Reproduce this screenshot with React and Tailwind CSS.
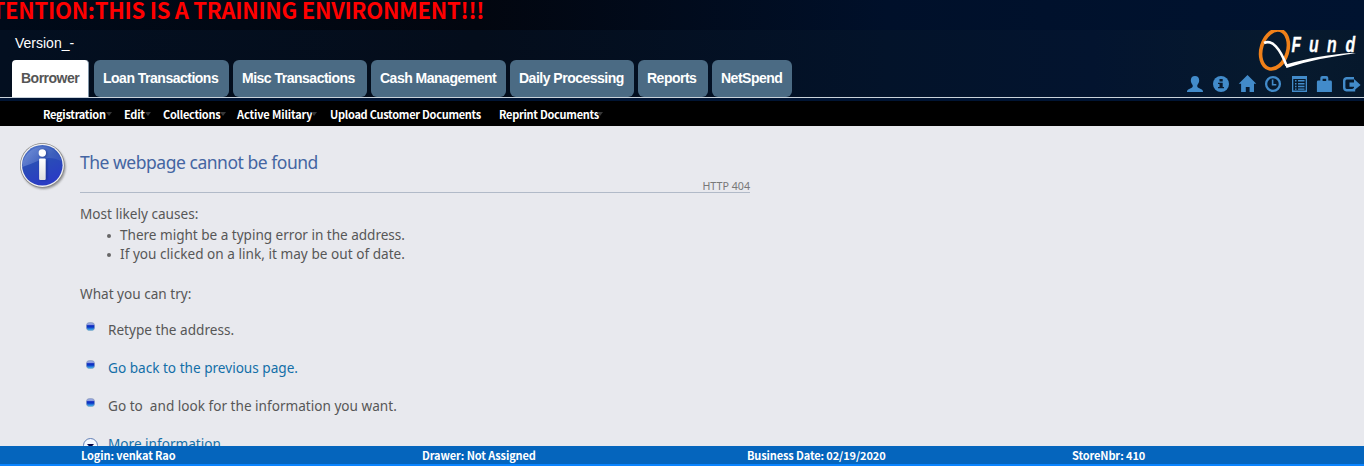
const ICON = "#428bca";

function Logo() {
  return (
    <svg width="104" height="42" viewBox="0 0 104 42" className="block overflow-hidden">
      <g fill="none">
        <ellipse cx="17.5" cy="19.5" rx="13.2" ry="20" transform="rotate(17 17.5 19.5)" stroke="#f08019" strokeWidth="3.600" />
        <path d="M7 13C15 9 23 18.500 29.500 35.500" stroke="#fff" strokeWidth="2.600" />
      </g>
      <path d="M28 34.500L29.500 38C52 30.500 74 26.500 99 23.200L92 23C72 24.700 50 28.500 30.500 34Z" fill="#fff" />
      <g fill="#fff" stroke="#fff" strokeWidth=".3" fontFamily="Liberation Sans, sans-serif" fontWeight="bold" fontStyle="italic" fontSize="22">
        <text transform="translate(34.500 21.800) scale(.7 1)">F</text>
        <text transform="translate(52 21.800) scale(.72 1)">u</text>
        <text transform="translate(70 21.800) scale(.72 1)">n</text>
        <text transform="translate(88.500 21.800) scale(.72 1)">d</text>
      </g>
    </svg>
  );
}

function ToolIcons() {
  return (
    <div className="flex items-center">
      <svg width="177" height="18" viewBox="1185 75 177 18" fill={ICON}>
        <path d="M1195 76c2.500 0 4.200 1.600 4.200 4.200 0 2-1 3.600-1.800 4.800-.5 1.500 0 2.200 1.400 3l3 1.600c.8.400 1.200 1.200 1.200 2.400h-16c0-1.200.4-2 1.200-2.400l3-1.600c1.400-.8 1.900-1.500 1.400-3-.8-1.200-1.800-2.800-1.800-4.800 0-2.600 1.700-4.200 4.200-4.200z" />
        <circle cx="1221" cy="84" r="8" />
        <path d="M1219.500 79h3.200v2.500h-3.200zM1218 82.700h4.700v4.300h1.300v1.300h-6V87h1.500v-3H1218z" fill="#0a1a2e" />
        <path d="M1247.500 75l8.800 8.700h-2.300V92h-4.400v-5h-3.800v5h-4.700v-8.300h-2.400z" />
        <circle cx="1273" cy="84" r="6.900" fill="none" stroke={ICON} strokeWidth="2.300" />
        <path d="M1272.600 79.500v5.300h3.700" fill="none" stroke={ICON} strokeWidth="1.600" />
        <path fillRule="evenodd" d="M1292 76h15v16h-15zM1293.300 79v11.500h12.400V79z" />
        <path d="M1295 80h1.500v1.400h-1.500zM1298 80h6.500v1.400h-6.500zM1295 83h1.500v1.400h-1.500zM1298 83h6.500v1.400h-6.500zM1295 85.800h1.500v1.400h-1.500zM1298 85.800h6.500v1.400h-6.500zM1295 88.400h1.500v1.300h-1.500zM1298 88.400h6.500v1.300h-6.500z" />
        <path fillRule="evenodd" d="M1320.300 80.500V78a2 2 0 0 1 2-2h4a2 2 0 0 1 2 2v2.500h2.200a1.400 1.400 0 0 1 1.400 1.400V92h-15v-10.100a1.400 1.400 0 0 1 1.400-1.400zM1322.600 81h3.600v-2.200h-3.600z" />
        <path d="M1354 78.300h-7.500a2.800 2.800 0 0 0-2.300 2.800v6.300a2.800 2.800 0 0 0 2.300 2.800h7.500v-2" fill="none" stroke={ICON} strokeWidth="2.400" />
        <path d="M1349.500 82.500h4.500v-3.500l6.600 5.900-6.600 5.700v-3.800h-4.500z" />
      </svg>
    </div>
  );
}

const TABS = [
  ["Loan Transactions", "w-[135px]"],
  ["Misc Transactions", "w-[134px]"],
  ["Cash Management", "w-[135px]"],
  ["Daily Processing", "w-[124px]"],
  ["Reports", "w-[70px]"],
  ["NetSpend", "w-[80px]"],
];

const MENU = [
  ["Registration", "w-[81px]", "w-[63px]", true],
  ["Edit", "w-[39px]", "w-[21px]", true],
  ["Collections", "w-[74px]", "w-[57px]", true],
  ["Active Military", "w-[93px]", "w-[74px] tracking-[-0.13px]", true],
  ["Upload Customer Documents", "w-[169px]", "w-[151px]", false],
  ["Reprint Documents", "w-[110px]", "w-[98px]", true],
];

function InfoBadge() {
  return (
    <svg width="50" height="50" viewBox="0 0 50 50" className="block">
      <defs>
        <linearGradient id="orb" x1="0" y1="0" x2="0.4" y2="1">
          <stop offset="0" stopColor="#5c80cf" />
          <stop offset=".45" stopColor="#2a4fb5" />
          <stop offset="1" stopColor="#2a3cc4" />
        </linearGradient>
        <linearGradient id="gloss" x1="0" y1="0" x2="1" y2="0">
          <stop offset="0" stopColor="#a8bcf0" stopOpacity=".4" />
          <stop offset="1" stopColor="#5070c0" stopOpacity=".3" />
        </linearGradient>
        <linearGradient id="stem" x1="0" y1="0" x2="0" y2="1">
          <stop offset="0" stopColor="#fff" />
          <stop offset="1" stopColor="#dedee0" />
        </linearGradient>
        <filter id="soft"><feGaussianBlur stdDeviation="1" /></filter>
      </defs>
      <circle cx="23.500" cy="25" r="22" fill="#555" opacity=".6" filter="url(#soft)" />
      <circle cx="22.300" cy="23.300" r="22.300" fill="#858585" />
      <circle cx="22.300" cy="23.300" r="21.600" fill="#f1f1f1" />
      <circle cx="22.300" cy="23.300" r="20.300" fill="url(#orb)" />
      <path d="M2.200 25A20.300 20.300 0 0 1 42 19.500Q30 13.500 20 18T2.200 25z" fill="url(#gloss)" />
      <g opacity=".5" fill="#102070" filter="url(#soft)"><circle cx="23.300" cy="11.500" r="4" /><rect x="20" y="18" width="7" height="20" /></g>
      <circle cx="22.300" cy="11" r="3.700" fill="#fff" />
      <rect x="19.100" y="16.500" width="6.600" height="21.500" rx="1" fill="url(#stem)" />
    </svg>
  );
}

function Bullet() {
  return (
    <svg width="9" height="9" viewBox="0 0 10 10" className="block">
      <defs>
        <linearGradient id="dot" x1="0" y1="0" x2="0" y2="1">
          <stop offset="0" stopColor="#9daade" />
          <stop offset=".28" stopColor="#8a9ae0" />
          <stop offset=".4" stopColor="#0a25c0" />
          <stop offset=".6" stopColor="#1040c8" />
          <stop offset="1" stopColor="#48c8f4" />
        </linearGradient>
      </defs>
      <rect x=".5" y=".5" width="9" height="9" rx="3.500" fill="url(#dot)" stroke="#8598b8" strokeWidth=".7" />
    </svg>
  );
}

function Step({ children, link }) {
  return (
    <li className="flex h-[38px] items-start">
      <span className="mt-[2px] ml-[6px] w-[22px]"><Bullet /></span>
      <span className={link ? "whitespace-pre leading-[20px] text-[#136fa8]" : "whitespace-pre leading-[20px]"}>{children}</span>
    </li>
  );
}

export default function App() {
  return (
    <div className="flex h-[466px] w-[1364px] flex-col overflow-hidden bg-[#e8e9ee] font-['Liberation_Sans',sans-serif]">
      <header className="flex h-[101px] flex-none flex-col bg-[linear-gradient(90deg,#030f20_0%,#040d1b_35%,#03132a_65%,#03142f_80%,#071a2e_95%,#06182c_100%)]">
        <div className="flex h-[30px] flex-none overflow-hidden bg-[linear-gradient(90deg,#000a19_0%,#02060f_35%,#00102a_65%,#001330_100%)]">
          <p className="-mt-[8px] -ml-[34px] h-[34px] whitespace-nowrap font-['Noto_Sans_CJK_SC',sans-serif] text-[22px] leading-[34px] font-bold tracking-[-0.28px] text-[#ff0000]">ATTENTION:THIS IS A TRAINING ENVIRONMENT!!!</p>
        </div>
        <div className="flex h-[67px] flex-none justify-between">
          <div className="flex flex-col">
            <p className="ml-[15px] h-[30px] pt-[3px] text-[14px] leading-[20px] text-white">Version_-</p>
            <nav className="flex h-[37px] gap-[4px] pl-[12px] text-[14px] leading-[36px] font-bold tracking-[-0.5px] text-white">
              <a className="mr-[1px] w-[77px] rounded-t-[4px] border-r border-[#8296a8] bg-white pl-[9px] text-[#555]">Borrower</a>
              {TABS.map(([label, width]) => (
                <a key={label} className={`${width} rounded-[6px] bg-[#4b6b84] pl-[9px] whitespace-nowrap`}>{label}</a>
              ))}
            </nav>
          </div>
          <div className="flex flex-col items-end">
            <div className="mr-[3px] h-[45px]"><Logo /></div>
            <div className="mr-[2px]"><ToolIcons /></div>
          </div>
        </div>
        <div className="h-px flex-none bg-[#c9d2da]" />
        <div className="h-[3px] bg-[#001433]" />
      </header>
      <nav className="flex h-[25px] flex-none bg-black pt-[1px] pl-[43px] font-['Noto_Sans_CJK_SC',sans-serif] text-[11px] leading-[24px] font-bold tracking-[-0.28px] text-white">
        {MENU.map(([label, width, textWidth, arrow]) => (
          <a key={label} className={`flex items-center whitespace-nowrap ${width}`}>
            <span className={textWidth}>{label}</span>
            {arrow && <svg width="6" height="4" viewBox="0 0 6 4" className="flex-none"><path d="M0 0h6L3 4z" fill="#383838" /></svg>}
          </a>
        ))}
      </nav>
      <main className="flex h-[320px] flex-none items-start overflow-hidden pl-[20px] font-['Noto_Sans',sans-serif] text-[13.600px] text-[#575757]">
        <div className="mt-[16px] w-[60px] flex-none"><InfoBadge /></div>
        <div className="w-[670px]">
          <h1 className="mt-[22px] h-[29px] text-[17.500px] leading-[28px] tracking-[-0.47px] text-[#4465a2]">The webpage cannot be found</h1>
          <p className="h-[16px] border-b border-[#b1bac8] text-right text-[10.700px] leading-[18px] text-[#787878]">HTTP 404</p>
          <p className="mt-[11px] h-[22px] leading-[20px]">Most likely causes:</p>
          <ul className="list-none">
            <li className="flex h-[19px] items-center tracking-[-0.03px]"><span className="ml-[27px] mr-[9px] size-[4px] rounded-full bg-[#666]" />There might be a typing error in the address.</li>
            <li className="flex h-[19px] items-center tracking-[0.02px]"><span className="ml-[27px] mr-[9px] size-[4px] rounded-full bg-[#666]" />If you clicked on a link, it may be out of date.</li>
          </ul>
          <p className="mt-[20px] h-[36px] leading-[20px]">What you can try:</p>
          <ul>
            <Step>Retype the address.</Step>
            <Step link>Go back to the previous page.</Step>
            <Step>{"Go to  and look for the information you want."}</Step>
            <li className="flex items-start leading-[20px] text-[#136fa8]">
              <svg width="16" height="16" viewBox="0 0 16 16" className="mt-[4px] mr-[9px] ml-[3px]">
                <circle cx="7.500" cy="7.500" r="7" fill="#f5f8ff" stroke="#607fb5" />
                <path d="M4 6h7L7.500 10z" fill="#050544" />
              </svg>
              More information
            </li>
          </ul>
        </div>
      </main>
      <footer className="flex h-[20px] flex-none border-b-2 border-[#0a84ff] bg-[#0565bd] pl-[81px] font-['Noto_Sans_CJK_SC',sans-serif] text-[11px] leading-[18px] font-bold tracking-[-0.12px] text-white">
        <span className="w-[341px]">Login: venkat Rao</span>
        <span className="w-[325px]">Drawer: Not Assigned</span>
        <span className="w-[325px]">Business Date: 02/19/2020</span>
        <span>StoreNbr: 410</span>
      </footer>
    </div>
  );
}
